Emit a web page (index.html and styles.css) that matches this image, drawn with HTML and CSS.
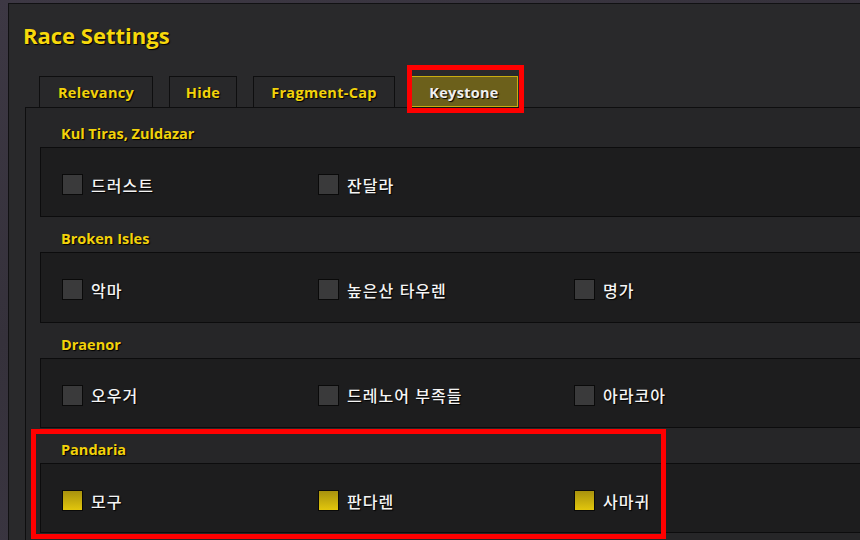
FILE: index.html
```html
<!DOCTYPE html>
<html lang="ko">
<head>
    <meta charset="UTF-8">
    <meta name="viewport" content="width=device-width, initial-scale=1.0">
    <title>Race Settings</title>
    <link rel="stylesheet" href="styles.css">
</head>
<body>
    <div class="frame">
        <h1 class="title">Race Settings</h1>

        <div class="tabs">
            <div class="tab tab-relevancy">Relevancy</div>
            <div class="tab tab-hide">Hide</div>
            <div class="tab tab-cap">Fragment-Cap</div>
            <div class="tab tab-keystone active">Keystone</div>
        </div>

        <div class="content">
            <section class="group">
                <div class="group-title">Kul Tiras, Zuldazar</div>
                <div class="group-box">
                    <label class="option"><span class="check"></span>드러스트</label>
                    <label class="option"><span class="check"></span>잔달라</label>
                </div>
            </section>

            <section class="group">
                <div class="group-title">Broken Isles</div>
                <div class="group-box">
                    <label class="option"><span class="check"></span>악마</label>
                    <label class="option"><span class="check"></span>높은산 타우렌</label>
                    <label class="option"><span class="check"></span>명가</label>
                </div>
            </section>

            <section class="group">
                <div class="group-title">Draenor</div>
                <div class="group-box">
                    <label class="option"><span class="check"></span>오우거</label>
                    <label class="option"><span class="check"></span>드레노어 부족들</label>
                    <label class="option"><span class="check"></span>아라코아</label>
                </div>
            </section>

            <section class="group">
                <div class="group-title">Pandaria</div>
                <div class="group-box">
                    <label class="option"><span class="check checked"></span>모구</label>
                    <label class="option"><span class="check checked"></span>판다렌</label>
                    <label class="option"><span class="check checked"></span>사마귀</label>
                </div>
            </section>
        </div>

        <div class="mark mark-tab"></div>
        <div class="mark mark-group"></div>
    </div>
</body>
</html>
```

FILE: styles.css
```css
html, body {
    margin: 0;
    height: 100%;
    overflow: hidden;
}
body {
    background: linear-gradient(160deg, #3d3844, #35313b 40%, #3f3a47);
    font-family: "Open Sans", "Noto Sans CJK KR", sans-serif;
}

.frame {
    position: relative;
    box-sizing: border-box;
    height: calc(100% - 3px);
    margin: 3px 0 0 8px;
    border-top: 1px solid #111113;
    border-left: 1px solid #111113;
    background-color: #29292b;
    overflow: hidden;
}

.title {
    margin: 0;
    padding: 17px 0 0 14px;
    font-size: 22px;
    line-height: 28px;
    font-weight: 700;
    color: #f7d80c;
    text-shadow: 1px 1px 1px #000;
}

.tabs {
    display: flex;
    gap: 16px;
    margin-top: 27px;
    padding-left: 30px;
    height: 31px;
}
.tab {
    display: flex;
    align-items: center;
    justify-content: center;
    box-sizing: border-box;
    height: 31px;
    border: 1px solid #0e0e0f;
    border-bottom: none;
    background-color: #28282a;
    color: #f2d20b;
    font-size: 14.5px;
    font-weight: 700;
    letter-spacing: 0.3px;
    text-shadow: 1px 1px 1px #000;
    padding-top: 1px;
}
.tab-relevancy { width: 114px; }
.tab-hide { width: 68px; }
.tab-cap { width: 142px; }
.tab-keystone { width: 108px; margin-left: -1px; }
.tab.active {
    background-color: #6c601b;
    border: 1px solid #c9ad10;
    color: #f0f0f0;
}

.content {
    box-sizing: border-box;
    height: 100%;
    margin-left: 16px;
    border-top: 1px solid #0e0e0f;
    border-left: 1px solid #0e0e0f;
    background-color: #262628;
    padding: 4px 0 0 14px;
}

.group-title {
    height: 35px;
    box-sizing: border-box;
    padding: 12px 0 0 21px;
    font-size: 14.5px;
    line-height: 20px;
    font-weight: 700;
    color: #f2d20b;
    text-shadow: 1px 1px 1px #000;
}

.group-box {
    display: flex;
    align-items: center;
    box-sizing: border-box;
    height: 70.3px;
    padding: 5px 0 0 21px;
    border: 1px solid #0c0c0d;
    border-right: none;
    background-color: #1d1d1e;
}

.option {
    display: flex;
    align-items: center;
    gap: 8px;
    width: 256px;
    flex-shrink: 0;
    font-family: "Noto Sans CJK KR", sans-serif;
    font-size: 16px;
    font-weight: 500;
    letter-spacing: 1px;
    color: #f4f4f4;
    text-shadow: 1px 1px 1px #000;
}

.check {
    display: block;
    flex-shrink: 0;
    width: 19px;
    height: 19px;
    border: 1px solid #0a0a0a;
    background-color: #3a3a3b;
}
.check.checked {
    background: linear-gradient(#a8920e, #e2c60c);
}

.mark {
    position: absolute;
    border: 5px solid #ff0000;
    box-sizing: border-box;
}
.mark-tab {
    left: 398px;
    top: 61px;
    width: 117px;
    height: 48px;
}
.mark-group {
    left: 22px;
    top: 425px;
    width: 635px;
    height: 110px;
}
```
